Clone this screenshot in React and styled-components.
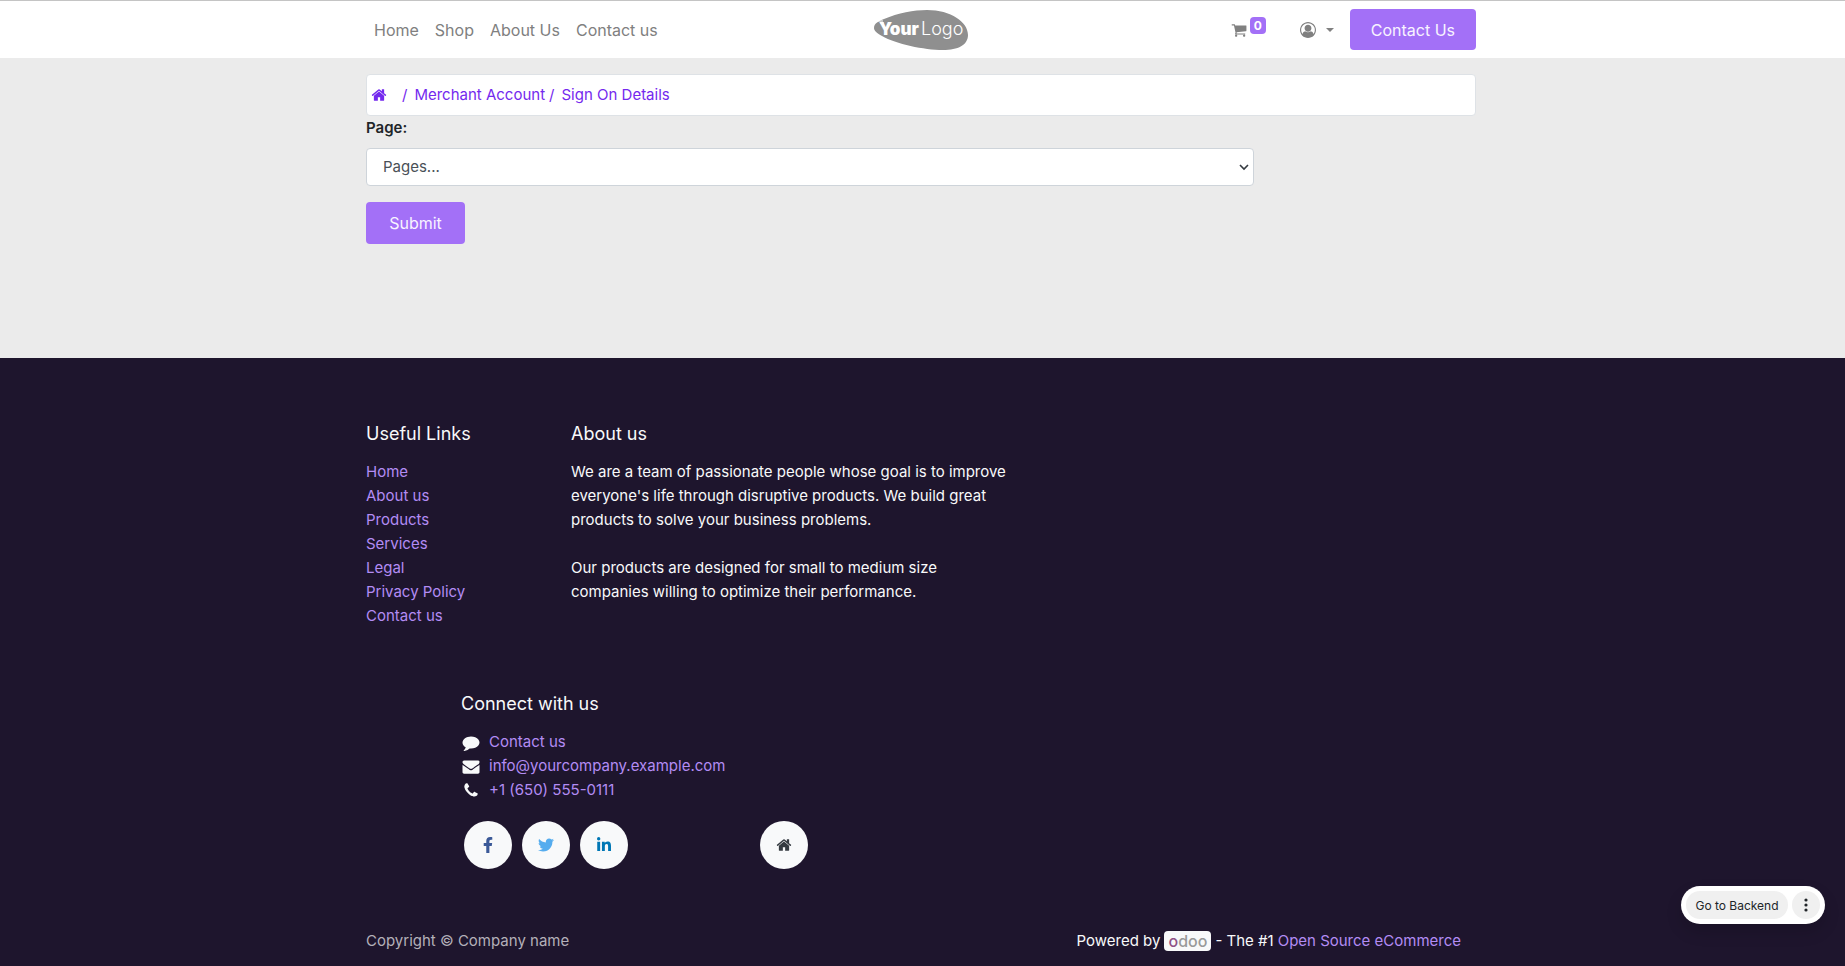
import React from "react";
import styled, { createGlobalStyle } from "styled-components";
import { FaFacebookF, FaTwitter, FaLinkedinIn } from "react-icons/fa";

const GlobalStyle = createGlobalStyle`
  *, *::before, *::after { box-sizing: border-box; }
  body {
    margin: 0;
    background: #1e152d;
    color: #212529;
    font-family: Inter, "Liberation Sans", sans-serif;
    font-size: 15px;
    line-height: 24px;
  }
  a { text-decoration: none; }
`;

const Container = styled.div`
  max-width: 1143px;
  margin: 0 auto;
  padding: 0 18px 0 15px;
`;

const Header = styled.header`
  border-top: 1px solid #c4c4c4;
  background: #fff;
`;

const HeaderRow = styled(Container)`
  display: grid;
  grid-template-columns: 1fr auto 1fr;
  align-items: center;
  padding-top: 8px;
  padding-bottom: 8px;
`;

const Nav = styled.nav`
  display: flex;
  gap: 16px;
  padding-left: 8px;
`;

const NavLink = styled.a`
  color: #808080;
  font-size: 16px;
`;

const LogoLink = styled.a`
  display: block;
  height: 40px;
`;

const HeaderTools = styled.div`
  display: flex;
  align-items: center;
  justify-content: flex-end;
`;

const CartLink = styled.a`
  display: flex;
  align-items: center;
  gap: 3px;
  margin-right: 34px;
  color: #808080;
`;

const CartCount = styled.span`
  min-width: 16px;
  margin-bottom: 8px;
  border-radius: 4px;
  background: #a370f7;
  color: #fff;
  font-size: 12px;
  font-weight: 700;
  line-height: 17px;
  text-align: center;
`;

const UserButton = styled.button`
  display: flex;
  align-items: center;
  gap: 10px;
  margin-right: 16px;
  padding: 0;
  border: 0;
  background: none;
  color: #808080;
`;

const Caret = styled.span`
  border: 4px solid transparent;
  border-top-color: currentColor;
  border-bottom: 0;
`;

const PrimaryButton = styled.button`
  min-width: 99px;
  height: ${(p) => (p.$tall ? 42 : 41)}px;
  padding: 0 21px;
  border: 0;
  border-radius: 4px;
  background: #a370f7;
  color: #f8f4ff;
  font-family: inherit;
  font-size: 16px;
`;

const Main = styled.main`
  min-height: 300px;
  padding-top: 16px;
  background: #ebebeb;
`;

const Breadcrumb = styled.nav`
  display: flex;
  align-items: center;
  height: 42px;
  padding: 0 4px;
  border: 1px solid #dee2e6;
  border-radius: 4px;
  background: #fff;
  color: #7429ee;
`;

const Crumb = styled.a`
  display: flex;
  color: inherit;
`;

const Slash = styled.span`
  margin-left: ${(p) => (p.$wide ? 15 : 4)}px;
  margin-right: 7px;
`;

const Form = styled.form`
  display: flex;
  flex-direction: column;
  align-items: flex-start;
`;

const Label = styled.label`
  margin-bottom: 8px;
  font-weight: 600;
`;

const SelectBox = styled.div`
  position: relative;
  width: 80%;
  margin-bottom: 16px;
  svg {
    position: absolute;
    right: 5px;
    top: 14px;
    pointer-events: none;
  }
`;

const Select = styled.select`
  display: block;
  width: 100%;
  height: 38px;
  padding: 0 16px;
  border: 1px solid #ced4da;
  border-radius: 4px;
  appearance: none;
  background: #fff;
  color: #495057;
  font: inherit;
`;

const Footer = styled.footer`
  padding-top: 64px;
  background: #1e152d;
  color: #f8f9fa;
`;

const Columns = styled.div`
  display: grid;
  grid-template-columns: 205px minmax(0, 440px);
`;

const Heading = styled.h5`
  margin: 0 0 14px;
  font-size: 18px;
  font-weight: 400;
  line-height: 24px;
`;

const LinkList = styled.ul`
  margin: 0;
  padding: 0;
  list-style: none;
`;

const FooterLink = styled.a`
  color: #b38cf4;
`;

const Paragraph = styled.p`
  margin: 0 0 24px;
`;

const Connect = styled.section`
  max-width: 442px;
  margin-top: 64px;
  padding-left: 95px;
`;

const ContactItem = styled.li`
  display: flex;
  align-items: center;
  gap: 8px;
  svg {
    width: 20px;
  }
`;

const Socials = styled.div`
  display: flex;
  gap: 10px;
  margin-top: 19px;
  padding-left: 3px;
`;

const SocialLink = styled.a`
  display: grid;
  place-items: center;
  flex: none;
  width: 48px;
  height: 48px;
  margin-left: ${(p) => (p.$apart ? "auto" : 0)};
  border-radius: 50%;
  background: #f8f9fa;
  color: ${(p) => p.$color};
  font-size: 16px;
`;

const Bottom = styled.div`
  display: flex;
  align-items: center;
  justify-content: space-between;
  margin-top: 60px;
  padding: 0 15px 13px 0;
`;

const Copyright = styled.span`
  color: #b4b0b9;
`;

const Powered = styled.div`
  display: flex;
  align-items: center;
  gap: 4px;
`;

const OdooBadge = styled.a`
  width: 47px;
  border-radius: 4px;
  background: #f8f9fa;
  color: #999;
  font-size: 16px;
  font-weight: 500;
  line-height: 20px;
  text-align: center;
`;

const OdooO = styled.span`
  color: #8f5187;
`;

const BackendBar = styled.div`
  position: fixed;
  right: 20px;
  bottom: 42px;
  display: flex;
  gap: 4px;
  padding: 5px;
  border-radius: 19px;
  background: #fff;
  box-shadow: 0 8px 16px rgba(0, 0, 0, 0.15);
`;

const BackendButton = styled.button`
  display: grid;
  place-items: center;
  width: ${(p) => (p.$round ? 28 : 102)}px;
  height: 28px;
  padding: 0;
  border: 0;
  border-radius: 14px;
  background: #f0f0f0;
  color: #212529;
  font-family: inherit;
  font-size: 12px;
`;

const ICONS = {
  home: "M1472 992v480q0 26-19 45t-45 19h-384v-384h-256v384h-384q-26 0-45-19t-19-45v-480q0-1 .5-3t.5-3l575-474 575 474q1 2 1 6zm223-69l-62 74q-8 9-21 11h-3q-13 0-21-7l-692-577-692 577q-12 8-24 7-13-2-21-11l-62-74q-8-10-7-23.5t11-21.5l719-599q32-26 76-26t76 26l244 204v-195q0-14 9-23t23-9h192q14 0 23 9t9 23v408l219 182q10 8 11 21.5t-7 23.5z",
  user: "M896 0q182 0 348 71t286 191 191 286 71 348q0 181-70.5 347t-190.5 286-286 191.5-349 71.5-349-71-285.5-191.5-190.5-286-71-347.5 71-348 191-286 286-191 348-71zm619 1351q149-205 149-455 0-156-61-298t-164-245-245-164-298-61-298 61-245 164-164 245-61 298q0 250 149 455 66-327 306-327 131 128 313 128t313-128q240 0 306 327zm-235-647q0-159-112.5-271.5t-271.5-112.5-271.5 112.5-112.5 271.5 112.5 271.5 271.5 112.5 271.5-112.5 112.5-271.5z",
  cart: "M704 1536q0 52-38 90t-90 38-90-38-38-90 38-90 90-38 90 38 38 90zm896 0q0 52-38 90t-90 38-90-38-38-90 38-90 90-38 90 38 38 90zm128-1088v512q0 24-16.5 42.5t-40.5 21.5l-1044 122q13 60 13 70 0 16-24 64h920q26 0 45 19t19 45-19 45-45 19h-1024q-26 0-45-19t-19-45q0-11 8-31.5t16-36 21.5-40 15.5-29.5l-177-823h-204q-26 0-45-19t-19-45 19-45 45-19h256q16 0 28.5 6.5t19.5 15.5 13 24.5 8 26 5.5 29.5 4.5 26h1201q26 0 45 19t19 45z",
  comment: "M1792 896q0 174-120 321.5t-326 233-450 85.5q-70 0-145-8-198 175-460 242-49 14-114 22-17 2-30.5-9t-17.5-29v-1q-3-4-.5-12t2-10 4.5-9.5l6-9 7-8.5 8-9q7-8 31-34.5t34.5-38 31-39.5 32.5-51 27-59 26-76q-157-89-247.5-220t-90.5-281q0-130 71-248.5t191-204.5 286-136.5 348-50.5q244 0 450 85.5t326 233 120 321.5z",
  envelope: "M1792 710v794q0 66-47 113t-113 47h-1472q-66 0-113-47t-47-113v-794q44 49 101 87 362 246 497 345 57 42 92.5 65.5t94.5 48 110 24.5h2q51 0 110-24.5t94.5-48 92.5-65.5q170-123 498-345 57-39 100-87zm0-294q0 79-49 151t-122 123q-376 261-468 325-10 7-42.5 31t-54 38.5-52 32.5-57.5 27-50 9h-2q-23 0-50-9t-57.5-27-52-32.5-54-38.5-42.5-31q-91-64-262-182.5t-205-142.5q-62-42-117-115.5t-55-136.5q0-78 41.5-130t118.5-52h1472q65 0 112.5 47t47.5 113z",
  phone: "M1600 1240q0 27-10 70.5t-21 68.5q-21 50-122 106-94 51-186 51-27 0-53-3.5t-57.5-12.5-47-14.5-55.5-20.5-49-18q-98-35-175-83-127-79-264-216t-216-264q-48-77-83-175-3-9-18-49t-20.5-55.5-14.5-47-12.5-57.5-3.5-53q0-92 51-186 56-101 106-122 25-11 68.5-21t70.5-10q14 0 21 3 18 6 53 76 11 19 30 54t35 63.5 31 53.5q3 4 17.5 25t21.5 35.5 7 28.5q0 20-28.5 50t-62 55-62 53-28.5 46q0 9 5 22.5t8.5 20.5 14 24 11.5 19q76 137 174 235t235 174q2 1 19 11.5t24 14 20.5 8.5 22.5 5q18 0 46-28.5t53-62 55-62 50-28.5q14 0 28.5 7t35.5 21.5 25 17.5q25 15 53.5 31t63.5 35 54 30q70 35 76 53 3 7 3 21z",
};

const Icon = ({ name, size = 16 }) => (
  <svg width={size} height={size} viewBox="0 0 1792 1792" fill="currentColor" aria-hidden="true">
    <path d={ICONS[name]} />
  </svg>
);

const LogoName = styled.text`
  fill: #fff;
  font-size: ${(p) => (p.$bold ? 17 : 18)}px;
  font-weight: ${(p) => (p.$bold ? 900 : 300)};
`;

const Logo = () => (
  <svg width="94" height="40" viewBox="0 0 94 40" role="img" aria-label="YourLogo">
    <path
      fill="#8f8f8f"
      d="M0 18C0 13 5 11 10 9C24 3 40 0 53 0C77 0 94 12 94 25C94 35 84 40 69 40C50 40 22 34 8 26C3 23 0 21 0 18Z"
    />
    <path fill="none" stroke="#fff" strokeWidth="1" d="M4 11h5M6 13h4" />
    <LogoName x="5" y="25" $bold>Your</LogoName>
    <LogoName x="47" y="25">Logo</LogoName>
  </svg>
);

const NAV = ["Home", "Shop", "About Us", "Contact us"];
const USEFUL = ["Home", "About us", "Products", "Services", "Legal", "Privacy Policy", "Contact us"];
const CONTACTS = [
  ["comment", "Contact us"],
  ["envelope", "info@yourcompany.example.com"],
  ["phone", "+1 (650) 555-0111"],
];

export default function App() {
  return (
    <>
      <GlobalStyle />
      <Header>
        <HeaderRow>
          <Nav>
            {NAV.map((t) => (
              <NavLink href="#" key={t}>{t}</NavLink>
            ))}
          </Nav>
          <LogoLink href="#"><Logo /></LogoLink>
          <HeaderTools>
            <CartLink href="#" aria-label="Cart">
              <Icon name="cart" />
              <CartCount>0</CartCount>
            </CartLink>
            <UserButton aria-label="Account">
              <Icon name="user" />
              <Caret />
            </UserButton>
            <PrimaryButton>Contact Us</PrimaryButton>
          </HeaderTools>
        </HeaderRow>
      </Header>

      <Main>
        <Container>
          <Breadcrumb aria-label="Breadcrumb">
            <Crumb href="#" aria-label="Home"><Icon name="home" /></Crumb>
            <Slash $wide>/</Slash>
            <Crumb href="#">Merchant Account</Crumb>
            <Slash>/</Slash>
            <Crumb href="#">Sign On Details</Crumb>
          </Breadcrumb>
          <Form onSubmit={(e) => e.preventDefault()}>
            <Label htmlFor="page">Page:</Label>
            <SelectBox>
              <Select id="page">
                <option>Pages...</option>
              </Select>
              <svg width="10" height="10" viewBox="0 0 10 10" fill="none" stroke="#343a40" strokeWidth="1.6" aria-hidden="true">
                <path d="M1 3l4 4 4-4" />
              </svg>
            </SelectBox>
            <PrimaryButton type="submit" $tall>Submit</PrimaryButton>
          </Form>
        </Container>
      </Main>

      <Footer>
        <Container>
          <Columns>
            <section>
              <Heading>Useful Links</Heading>
              <LinkList>
                {USEFUL.map((t) => (
                  <li key={t}><FooterLink href="#">{t}</FooterLink></li>
                ))}
              </LinkList>
            </section>
            <section>
              <Heading>About us</Heading>
              <Paragraph>
                We are a team of passionate people whose goal is to improve everyone's life through
                disruptive products. We build great products to solve your business problems.
              </Paragraph>
              <Paragraph>
                Our products are designed for small to medium size companies willing to optimize
                their performance.
              </Paragraph>
            </section>
          </Columns>
          <Connect>
            <Heading>Connect with us</Heading>
            <LinkList>
              {CONTACTS.map(([icon, text]) => (
                <ContactItem key={text}>
                  <Icon name={icon} size={17} />
                  <FooterLink href="#">{text}</FooterLink>
                </ContactItem>
              ))}
            </LinkList>
            <Socials>
              <SocialLink href="#" aria-label="Facebook" $color="#3b5998"><FaFacebookF /></SocialLink>
              <SocialLink href="#" aria-label="Twitter" $color="#55acee"><FaTwitter /></SocialLink>
              <SocialLink href="#" aria-label="LinkedIn" $color="#0077b5"><FaLinkedinIn /></SocialLink>
              <SocialLink href="#" aria-label="Home" $color="#343a40" $apart><Icon name="home" /></SocialLink>
            </Socials>
          </Connect>
          <Bottom>
            <Copyright>Copyright © Company name</Copyright>
            <Powered>
              <span>Powered by</span>
              <OdooBadge href="#"><OdooO>o</OdooO>doo</OdooBadge>
              <span>- The #1</span>
              <FooterLink href="#">Open Source eCommerce</FooterLink>
            </Powered>
          </Bottom>
        </Container>
      </Footer>

      <BackendBar>
        <BackendButton>Go to Backend</BackendButton>
        <BackendButton $round aria-label="More">
          <svg width="4" height="14" viewBox="0 0 4 14" fill="currentColor" aria-hidden="true">
            <circle cx="2" cy="2" r="1.6" />
            <circle cx="2" cy="7" r="1.6" />
            <circle cx="2" cy="12" r="1.6" />
          </svg>
        </BackendButton>
      </BackendBar>
    </>
  );
}
